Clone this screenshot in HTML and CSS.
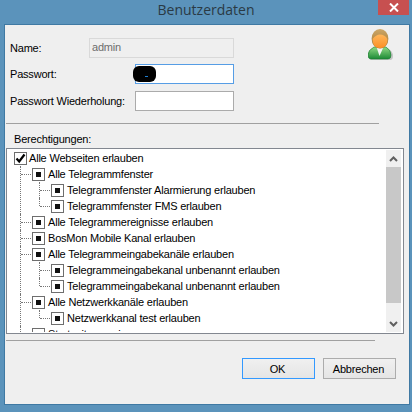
FILE: index.html
```html
<!DOCTYPE html>
<html lang="de">
<head>
    <meta charset="UTF-8">
    <title>Benutzerdaten</title>
    <link rel="stylesheet" href="styles.css">
</head>
<body>

    <div class="window">
        <div class="titlebar">
            <span></span>
            <span class="title">Benutzerdaten</span>
            <span class="close-wrap">
                <span class="close">
                    <svg width="10" height="9" viewBox="0 0 10 9"><path d="M1 0.5 L9 8.5 M9 0.5 L1 8.5" stroke="#fff" stroke-width="2" fill="none"/></svg>
                </span>
            </span>
        </div>

        <div class="client">
            <div class="top">
                <form class="fields">
                    <div class="form-group">
                        <label class="label-name">Name:</label>
                        <div class="field field-disabled">admin</div>
                    </div>
                    <div class="form-group">
                        <label class="label-pass">Passwort:</label>
                        <div class="field field-focus">
                            <span class="redact"><span class="caret"></span></span>
                        </div>
                    </div>
                    <div class="form-group form-group-last">
                        <label class="label-pass">Passwort Wiederholung:</label>
                        <div class="field"></div>
                    </div>
                </form>
                <svg class="user-icon" width="26" height="32" viewBox="0 0 26 32">
                    <defs>
                        <linearGradient id="shirt" x1="0" y1="0" x2="0" y2="1">
                            <stop offset="0" stop-color="#8fd884"/>
                            <stop offset="1" stop-color="#1c8a35"/>
                        </linearGradient>
                        <linearGradient id="face" x1="0" y1="0" x2="0" y2="1">
                            <stop offset="0" stop-color="#ffb65a"/>
                            <stop offset="1" stop-color="#fb8f25"/>
                        </linearGradient>
                        <linearGradient id="hair" x1="0" y1="0" x2="0" y2="1">
                            <stop offset="0" stop-color="#cda767"/>
                            <stop offset="1" stop-color="#a0742f"/>
                        </linearGradient>
                    </defs>
                    <path d="M3 31 Q1 31 1 27 Q1 22 6 19 L19 19 Q25 22 25 27 Q25 31 22 31 Z" fill="#9a9a9a" opacity="0.5"/>
                    <path d="M3 30 Q0 30 0 26 Q0 21 6 18 L18 18 Q23 21 23 26 Q23 30 20 30 Z" fill="url(#shirt)" stroke="#1b7a30" stroke-width="0.6"/>
                    <path d="M8.5 18 L11.5 27 L15.5 18 Z" fill="#f4f4f4"/>
                    <ellipse cx="12" cy="9.8" rx="8.4" ry="9.8" fill="url(#hair)"/>
                    <path d="M4.6 10 Q8 5.5 12 5.5 Q17 5.5 19.4 10 Q19.4 19.2 12 19.2 Q4.6 19.2 4.6 10 Z" fill="url(#face)"/>
                </svg>
            </div>

            <hr class="sep sep-top">

            <div class="perm-label">Berechtigungen:</div>

            <div class="tree-box">
                <div class="tree">
                    <div class="row">
                        <span class="box box-checked">
                            <svg width="11" height="11" viewBox="0 0 11 11"><path d="M1.5 5.5 L4.2 8.5 L9.5 1.5" stroke="#000" stroke-width="2.2" fill="none"/></svg>
                        </span>
                        <span class="row-text">Alle Webseiten erlauben</span>
                    </div>
                    <ul class="branch">
                        <li>
                            <div class="row"><span class="box"></span><span class="row-text">Alle Telegrammfenster</span></div>
                            <ul class="branch">
                                <li><div class="row"><span class="box"></span><span class="row-text">Telegrammfenster Alarmierung erlauben</span></div></li>
                                <li><div class="row"><span class="box"></span><span class="row-text">Telegrammfenster FMS erlauben</span></div></li>
                            </ul>
                        </li>
                        <li><div class="row"><span class="box"></span><span class="row-text">Alle Telegrammereignisse erlauben</span></div></li>
                        <li><div class="row"><span class="box"></span><span class="row-text">BosMon Mobile Kanal erlauben</span></div></li>
                        <li>
                            <div class="row"><span class="box"></span><span class="row-text">Alle Telegrammeingabekanäle erlauben</span></div>
                            <ul class="branch">
                                <li><div class="row"><span class="box"></span><span class="row-text">Telegrammeingabekanal unbenannt erlauben</span></div></li>
                                <li><div class="row"><span class="box"></span><span class="row-text">Telegrammeingabekanal unbenannt erlauben</span></div></li>
                            </ul>
                        </li>
                        <li>
                            <div class="row"><span class="box"></span><span class="row-text">Alle Netzwerkkanäle erlauben</span></div>
                            <ul class="branch">
                                <li><div class="row"><span class="box"></span><span class="row-text">Netzwerkkanal test erlauben</span></div></li>
                            </ul>
                        </li>
                        <li><div class="row"><span class="box box-empty"></span><span class="row-text">Startseite anzeigen</span></div></li>
                    </ul>
                </div>
                <div class="scrollbar">
                    <div class="scroll-btn">
                        <svg width="9" height="6" viewBox="0 0 9 6"><path d="M1 5 L4.5 1.5 L8 5" stroke="#606060" stroke-width="2" fill="none"/></svg>
                    </div>
                    <div class="scroll-thumb"></div>
                    <div class="scroll-track"></div>
                    <div class="scroll-btn">
                        <svg width="9" height="6" viewBox="0 0 9 6"><path d="M1 1 L4.5 4.5 L8 1" stroke="#606060" stroke-width="2" fill="none"/></svg>
                    </div>
                </div>
            </div>

            <hr class="sep sep-bottom">

            <div class="buttons">
                <button type="button" class="btn btn-default">OK</button>
                <button type="button" class="btn">Abbrechen</button>
            </div>
        </div>
    </div>

</body>
</html>
```

FILE: styles.css
```css
* {
    box-sizing: border-box;
}
body {
    margin: 0;
    font-family: "Liberation Sans", Arial, sans-serif;
    font-size: 11px;
    letter-spacing: -0.2px;
    color: #000;
    background-color: #5b93bb;
}
.window {
    width: 412px;
    height: 412px;
    padding: 0 2px 7px 4px;
    display: flex;
    flex-direction: column;
    overflow: hidden;
}
.titlebar {
    height: 24px;
    flex-shrink: 0;
    display: grid;
    grid-template-columns: 1fr auto 1fr;
    margin-left: -2px;
}
.title {
    font-family: "Open Sans", sans-serif;
    font-size: 14px;
    line-height: 19px;
    letter-spacing: 0;
    color: #2a3a45;
}
.close-wrap {
    display: flex;
    justify-content: flex-end;
    padding-right: 1px;
}
.close {
    width: 31px;
    height: 15px;
    background-color: #c75050;
    display: flex;
    align-items: center;
    justify-content: center;
}
.client {
    flex: 1;
    background-color: #efefef;
    border: 1px solid #3f79a3;
    padding: 13px 0 0 1px;
    min-height: 0;
}
.top {
    display: flex;
    align-items: flex-start;
}
.fields {
    width: 224px;
    margin-left: 4px;
}
.form-group {
    display: flex;
    align-items: center;
    height: 20px;
    margin-bottom: 6px;
}
.form-group-last {
    margin-top: 7px;
}
.label-name {
    width: 79px;
}
.label-pass {
    width: 125px;
    flex-shrink: 0;
    white-space: nowrap;
}
.field {
    position: relative;
    flex: 1;
    height: 20px;
    background-color: #fff;
    border: 1px solid #ababab;
    line-height: 17px;
    padding-left: 2px;
}
.field-disabled {
    background-color: #efefef;
    border-color: #d9d9d9;
    color: #6d6d6d;
}
.field-focus {
    border-color: #569de5;
}
/* scribbled out over the field */
.redact {
    position: absolute;
    left: -3px;
    top: 1px;
    width: 23px;
    height: 16px;
    background-color: #000;
    border-radius: 6px;
}
.caret {
    position: absolute;
    left: 12px;
    top: 10px;
    width: 3px;
    height: 1px;
    background-color: #1f7fd0;
}
.user-icon {
    margin: -9px 0 0 134px;
}
.sep {
    margin: 0;
    border: none;
    height: 1px;
    background-color: #a0a0a0;
}
.sep-top {
    width: 373px;
    margin-top: 6px;
}
.perm-label {
    margin: 8px 0 0 8px;
    line-height: 14px;
    height: 16px;
}
.tree-box {
    width: 398px;
    height: 186px;
    background-color: #fff;
    border: 1px solid #828790;
    display: flex;
    padding: 1px 2px 1px 1px;
}
.tree {
    flex: 1;
    overflow: hidden;
    padding-left: 6px;
}
.row {
    display: flex;
    align-items: center;
    height: 16px;
    white-space: nowrap;
}
.row-text {
    margin-left: 3px;
}
.box-checked + .row-text {
    margin-left: 2px;
}
.box {
    position: relative;
    width: 13px;
    height: 13px;
    flex-shrink: 0;
    border: 1px solid #6e6e6e;
    background-color: #fff;
    display: flex;
    align-items: center;
    justify-content: center;
}
.box::after {
    content: "";
    width: 5px;
    height: 5px;
    background-color: #111;
}
.box-checked::after,
.box-empty::after {
    display: none;
}
.branch {
    list-style: none;
    margin: 0;
    padding: 0 0 0 18px;
}
.branch .branch {
    padding-left: 19px;
}
.branch > li {
    position: relative;
}
/* tree lines */
.branch > li::before {
    content: "";
    position: absolute;
    left: -12px;
    top: 0;
    bottom: 0;
    border-left: 1px dotted #777;
}
.branch .branch > li:last-child::before {
    bottom: auto;
    height: 8px;
}
.branch > li > .row::before {
    content: "";
    position: absolute;
    left: -11px;
    top: 8px;
    width: 10px;
    border-top: 1px dotted #777;
}
.scrollbar {
    width: 15px;
    margin-left: auto;
    display: flex;
    flex-direction: column;
    background-color: #f0f0f0;
}
.scroll-btn {
    height: 17px;
    flex-shrink: 0;
    display: flex;
    align-items: center;
    justify-content: center;
}
.scroll-thumb {
    height: 136px;
    background-color: #c8c8c8;
}
.scroll-track {
    flex: 1;
}
.sep-bottom {
    width: 369px;
    margin-top: 6px;
}
.buttons {
    display: flex;
    justify-content: flex-end;
    gap: 8px;
    margin: 17px 13px 0 0;
}
.btn {
    width: 73px;
    height: 21px;
    padding: 0 2px 0 0;
    font-family: inherit;
    font-size: 11px;
    letter-spacing: -0.2px;
    color: #000;
    background: linear-gradient(#f0f0f0, #e5e5e5);
    border: 1px solid #acacac;
}
.btn-default {
    border-color: #3399ff;
}
```
